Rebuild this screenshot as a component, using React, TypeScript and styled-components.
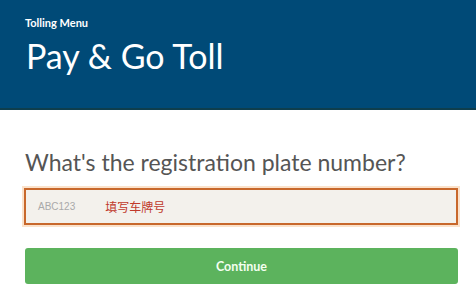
import { createGlobalStyle } from 'styled-components'
import styled from 'styled-components'

const GlobalStyle = createGlobalStyle`
	html, body {
		margin: 0;
		padding: 0;
		background: #ffffff;
		font-family: Lato, 'Noto Sans', sans-serif;
	}
`

const Header = styled.header`
	box-sizing: border-box;
	height: 110px;
	padding: 15px 25px 0 25px;
	background: #004a77;
	border-bottom: 2px solid #0e3e4d;
	color: #ffffff;
`

const Crumb = styled.div`
	font-size: 11px;
	font-weight: 700;
	line-height: 16px;
`

const Title = styled.h1`
	margin: 5px 0 0 1px;
	font-size: 34px;
	font-weight: 400;
	line-height: 40px;
`

const Main = styled.main`
	display: flex;
	flex-direction: column;
	padding: 38px 18px 0 25px;
`

const Question = styled.h2`
	margin: 0;
	font-size: 23px;
	font-weight: 400;
	line-height: 28px;
	color: #555555;
`

const Field = styled.div`
	box-sizing: border-box;
	display: flex;
	align-items: center;
	gap: 30px;
	height: 37px;
	margin: 12px 0 0 -1px;
	padding: 0 12px;
	background: #f3f1ec;
	border: 2px solid #c8682c;
	box-shadow: 0 0 0 2px rgba(246, 190, 140, 0.45);
`

const Placeholder = styled.span`
	font-family: 'Liberation Sans', Arial, sans-serif;
	font-size: 10px;
	color: #a9a9a9;
`

const Hint = styled.span`
	font-family: 'Noto Sans CJK SC', sans-serif;
	font-size: 12px;
	color: #c0392b;
`

const Button = styled.button`
	height: 36px;
	margin-top: 23px;
	border: none;
	border-radius: 3px;
	background: #5cb35d;
	color: #f4fff0;
	font-family: Lato, 'Noto Sans', sans-serif;
	font-size: 12.5px;
	font-weight: 700;
	cursor: pointer;
`

export default function App() {
	return (
		<>
			<GlobalStyle />
			<Header>
				<Crumb>Tolling Menu</Crumb>
				<Title>Pay &amp; Go Toll</Title>
			</Header>
			<Main>
				<Question>What's the registration plate number?</Question>
				<Field>
					<Placeholder>ABC123</Placeholder>
					<Hint>填写车牌号</Hint>
				</Field>
				<Button>Continue</Button>
			</Main>
		</>
	)
}
